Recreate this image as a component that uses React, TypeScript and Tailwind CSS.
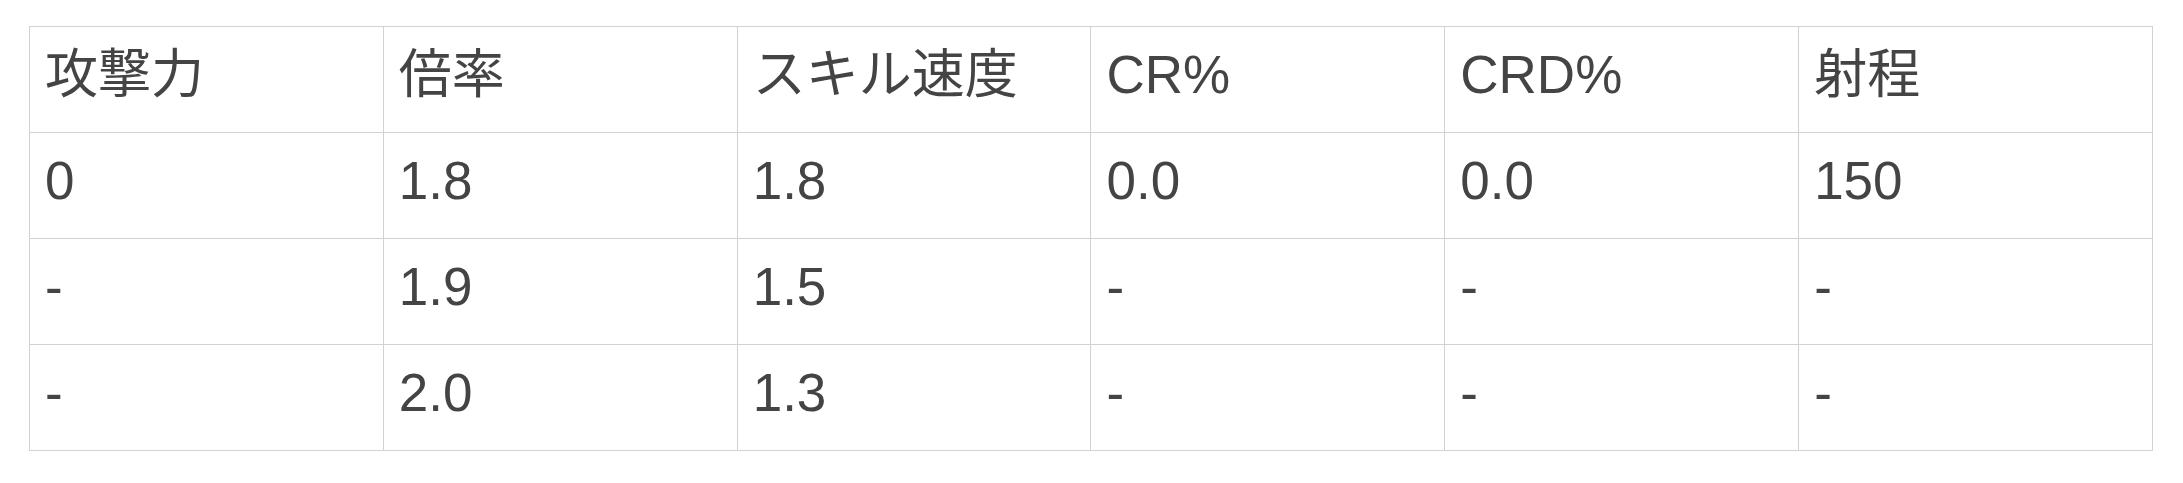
import React from "react";

const headers = ["攻撃力", "倍率", "スキル速度", "CR%", "CRD%", "射程"];

const rows = [
  ["0", "1.8", "1.8", "0.0", "0.0", "150"],
  ["-", "1.9", "1.5", "-", "-", "-"],
  ["-", "2.0", "1.3", "-", "-", "-"],
];

export default function App() {
  return (
    <div className="w-[2183px] h-[483px] bg-white pl-[29px] pt-[26px] font-['Liberation_Sans','Noto_Sans_CJK_JP',sans-serif] text-[#444444]">
      <table className="border-collapse table-fixed w-[2124px]">
        <thead>
          <tr>
            {headers.map((h) => (
              <th
                key={h}
                className="border border-[#d2d2d2] px-[15px] pt-[5.5px] pb-[15.5px] text-left font-normal text-[53px] leading-[84px]"
              >
                {h}
              </th>
            ))}
          </tr>
        </thead>
        <tbody>
          {rows.map((r, i) => (
            <tr key={i}>
              {r.map((c, j) => (
                <td
                  key={j}
                  className="border border-[#d2d2d2] px-[15px] pt-[5.5px] pb-[15.5px] text-[53px] leading-[84px]"
                >
                  {c}
                </td>
              ))}
            </tr>
          ))}
        </tbody>
      </table>
    </div>
  );
}
